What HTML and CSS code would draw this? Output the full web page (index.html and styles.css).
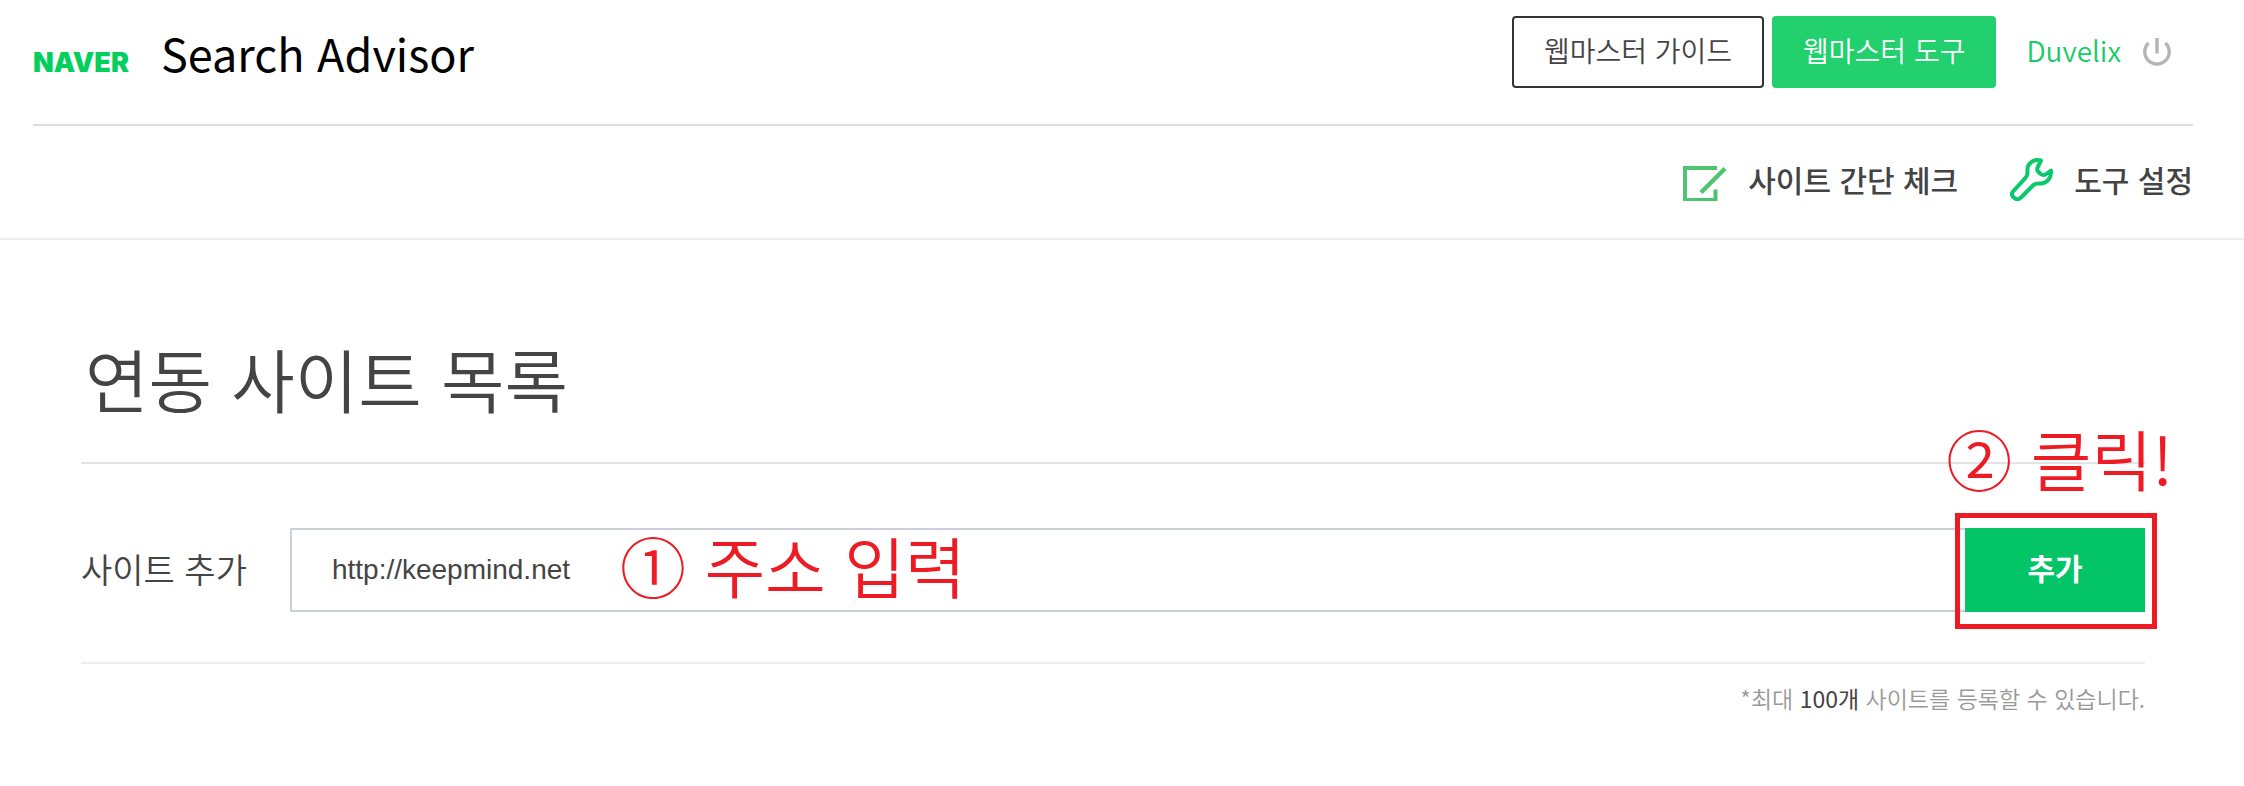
FILE: index.html
```html
<!DOCTYPE html>
<html lang="ko">
<head>
<meta charset="utf-8">
<title>Search Advisor</title>
<link rel="stylesheet" href="styles.css">
</head>
<body>
<header class="header">
  <div class="topbar">
    <a class="brand" href="#"><span class="brand-logo">NAVER</span><span class="brand-name">Search Advisor</span></a>
    <div class="account">
      <a class="btn btn-outline" href="#">웹마스터 가이드</a>
      <a class="btn btn-solid" href="#">웹마스터 도구</a>
      <a class="user" href="#">Duvelix</a>
      <button class="power" type="button" aria-label="로그아웃">
        <svg width="28" height="28" viewBox="0 0 28 28" fill="none" stroke="#b4b4b4" stroke-width="3.4"><path d="M5.6 5A12.2 12.2 0 1 0 22.4 5M14 0v15.5"/></svg>
      </button>
    </div>
  </div>
  <nav class="tools">
    <a class="tool" href="#">
      <svg width="44" height="43" viewBox="0 0 44 43" fill="none" stroke="#4fc470" stroke-width="4"><path d="M34 10H2v32h30.500V31.500"/><path d="M18 34.500 42 10.500" stroke-width="4.500"/></svg>
      <span>사이트 간단 체크</span>
    </a>
    <a class="tool" href="#">
      <svg width="43" height="43" viewBox="0 0 43 43" fill="none" stroke="#0ac96c" stroke-width="4" stroke-linejoin="round"><path d="M31 2.500C23 .5 16.500 6 17.500 13.500Q17.800 17.500 15.500 19.800L3 33.500Q.8 36 3 38.800L5 40.500Q8.500 42.300 11 39.500L23 27.500Q25.500 25 29.500 25.500C36.500 26 41.500 20.500 41 12.500L35.500 16.500Q33 17.800 30.500 16L28 13.500Q26.500 11.500 27.800 9Z"/></svg>
      <span>도구 설정</span>
    </a>
  </nav>
</header>
<main class="content">
  <h1 class="title">연동 사이트 목록</h1>
  <form class="add-form">
    <label class="add-label" for="site">사이트 추가</label>
    <div class="field">
      <input class="add-input" id="site" type="text" value="http://keepmind.net">
      <span class="note note-input">① 주소 입력</span>
    </div>
    <div class="submit">
      <button class="add-button" type="button">추가</button>
      <span class="highlight"></span>
      <span class="note note-click">② 클릭!</span>
    </div>
  </form>
  <p class="limit">*최대 <strong>100개</strong> 사이트를 등록할 수 있습니다.</p>
</main>
</body>
</html>
```
FILE: styles.css
```css
* { box-sizing: border-box; }

body {
  margin: 0;
  background: #fff;
  color: #444;
  font-family: "Noto Sans CJK KR", sans-serif;
  font-weight: 350;
}

a { color: inherit; text-decoration: none; }
button { padding: 0; border: 0; font-family: inherit; cursor: pointer; }
svg { display: block; flex: none; }

.header {
  padding: 0 51px 0 33px;
  border-bottom: 2px solid #eee;
}

.topbar {
  display: flex;
  justify-content: space-between;
  padding: 16px 0 36px;
  border-bottom: 2px solid #dedede;
}

.brand {
  display: flex;
  align-items: baseline;
  gap: 32px;
  height: 72px;
  line-height: 74px;
}

.brand-logo {
  color: #03cf5d;
  font-family: Inter, sans-serif;
  font-size: 27px;
  font-weight: 900;
}

.brand-name {
  color: #000;
  font-size: 45px;
  font-weight: 400;
}

.account {
  display: flex;
  align-items: center;
  gap: 8px;
  padding-right: 22px;
}

.btn {
  display: flex;
  align-items: center;
  height: 72px;
  padding: 0 31px 4px;
  border-radius: 4px;
  font-size: 28px;
}

.btn-outline {
  padding: 0 30px 4px;
  border: 2px solid #333;
}

.btn-solid { background: #22d06e; color: #fff; }

.user {
  margin: 0 14px 0 22px;
  padding-bottom: 4px;
  color: #18cb67;
  font-size: 28px;
}

.power { background: none; }

.tools {
  display: flex;
  justify-content: flex-end;
  gap: 52px;
  height: 112px;
  padding-bottom: 6px;
}

.tool {
  display: flex;
  align-items: center;
  gap: 21px;
  font-size: 30px;
  font-weight: 500;
}

.content { padding: 88px 99px 0 81px; }

.title {
  margin: 0;
  padding: 0 4px 34px;
  border-bottom: 2px solid #e3e3e3;
  font-size: 69px;
  font-weight: 350;
  line-height: 100px;
}

.add-form {
  display: flex;
  align-items: center;
  padding: 64px 0 50px;
  border-bottom: 2px solid #eee;
}

.add-label {
  flex: none;
  margin-right: 43px;
  padding-bottom: 4px;
  font-size: 34px;
}

.field { position: relative; flex: 1; }

.add-input {
  display: block;
  width: 100%;
  height: 84px;
  padding: 0 40px;
  border: 2px solid #cbd0da;
  border-right: 0;
  border-radius: 0;
  outline: 0;
  background: #fff;
  color: #444;
  font-family: "Liberation Sans", Arial, sans-serif;
  font-size: 28px;
}

.submit { position: relative; flex: none; }

.add-button {
  display: block;
  width: 180px;
  height: 84px;
  padding-bottom: 6px;
  background: #03c567;
  color: #fff;
  font-size: 30px;
  font-weight: 700;
}

.note {
  position: absolute;
  color: #ed1c24;
  font-size: 66px;
  font-weight: 350;
  line-height: 84px;
  white-space: nowrap;
}

.note-input { top: -6px; left: 330px; }
.note-click { top: -113px; right: -28px; }

.highlight {
  position: absolute;
  inset: -15px -12px -17px -10px;
  border: 5px solid #ed1c24;
  pointer-events: none;
}

.limit {
  margin: 16px 0 0;
  color: #999;
  font-size: 23px;
  line-height: 36px;
  text-align: right;
}

.limit strong { color: #444; font-weight: 400; }
```
